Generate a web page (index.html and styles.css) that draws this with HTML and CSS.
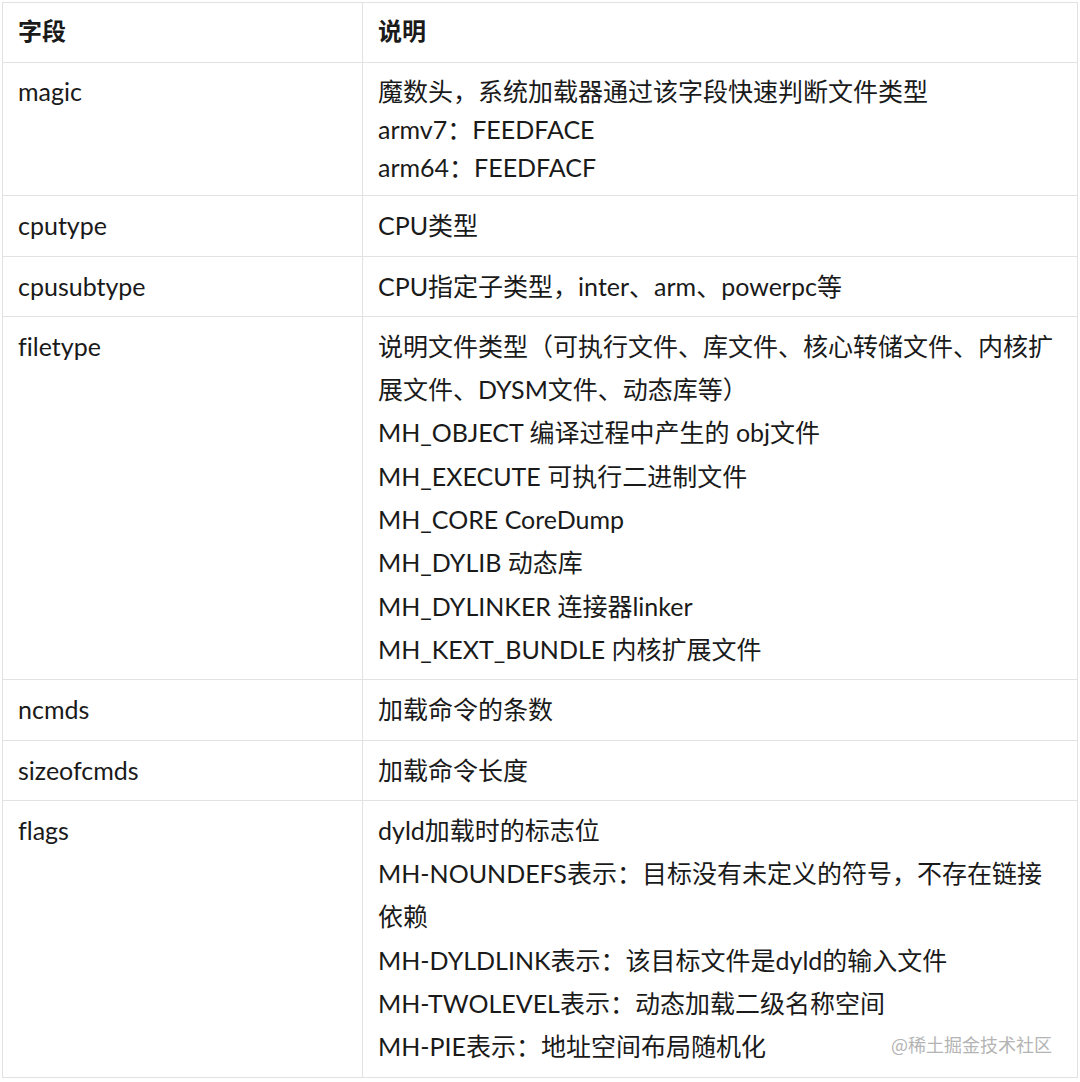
FILE: index.html
```html
<!DOCTYPE html>
<html lang="zh-CN">

<head>
    <meta charset="UTF-8">
    <meta name="viewport" content="width=device-width, initial-scale=1.0">
    <title>Mach-O Header</title>
    <link rel="stylesheet" href="styles.css">
</head>

<body>
    <div class="sheet">
        <table class="fields">
            <colgroup>
                <col class="col-name">
                <col class="col-desc">
            </colgroup>
            <thead>
                <tr>
                    <th>字段</th>
                    <th>说明</th>
                </tr>
            </thead>
            <tbody>
                <tr class="tight">
                    <td>magic</td>
                    <td>魔数头，系统加载器通过该字段快速判断文件类型<br>armv7：FEEDFACE<br>arm64：FEEDFACF</td>
                </tr>
                <tr>
                    <td>cputype</td>
                    <td>CPU类型</td>
                </tr>
                <tr>
                    <td>cpusubtype</td>
                    <td>CPU指定子类型，inter、arm、powerpc等</td>
                </tr>
                <tr>
                    <td>filetype</td>
                    <td>
                        <p>说明文件类型（可执行文件、库文件、核心转储文件、内核扩展文件、DYSM文件、动态库等）</p>
                        <p>MH_OBJECT 编译过程中产生的 obj文件</p>
                        <p>MH_EXECUTE 可执行二进制文件</p>
                        <p>MH_CORE CoreDump</p>
                        <p>MH_DYLIB 动态库</p>
                        <p>MH_DYLINKER 连接器linker</p>
                        <p>MH_KEXT_BUNDLE 内核扩展文件</p>
                    </td>
                </tr>
                <tr>
                    <td>ncmds</td>
                    <td>加载命令的条数</td>
                </tr>
                <tr>
                    <td>sizeofcmds</td>
                    <td>加载命令长度</td>
                </tr>
                <tr>
                    <td>flags</td>
                    <td>
                        <p>dyld加载时的标志位</p>
                        <p>MH-NOUNDEFS表示：目标没有未定义的符号，不存在链接依赖</p>
                        <p>MH-DYLDLINK表示：该目标文件是dyld的输入文件</p>
                        <p>MH-TWOLEVEL表示：动态加载二级名称空间</p>
                        <p>MH-PIE表示：地址空间布局随机化</p>
                    </td>
                </tr>
            </tbody>
        </table>
        <span class="watermark">@稀土掘金技术社区</span>
    </div>
</body>

</html>
```

FILE: styles.css
```css
body {
    margin: 0;
    background: #ffffff;
    font-family: 'Lato', 'Noto Sans CJK SC', sans-serif;
    font-variant-ligatures: none;
    color: #1a1a1a;
}

.sheet {
    position: relative;
    padding: 2px;
    width: 1076px;
}

p {
    margin: 0;
    padding: 0;
}

.fields {
    width: 1076px;
    border-collapse: collapse;
    table-layout: fixed;
    font-size: 25px;
    line-height: 43.3px;
}

.col-name {
    width: 360px;
}

.fields th,
.fields td {
    border: 1px solid #e2e2e2;
    padding: 8px 15px;
    text-align: left;
    vertical-align: top;
}

.fields th {
    font-weight: 700;
    font-size: 24px;
    padding: 6px 15px 10px;
}

.fields .tight td {
    line-height: 38px;
    padding: 9px 15px;
}

.watermark {
    position: absolute;
    right: 28px;
    bottom: 24px;
    font-size: 18px;
    line-height: 24px;
    color: #b4b4b4;
    font-family: 'Noto Sans CJK SC', sans-serif;
}
```
